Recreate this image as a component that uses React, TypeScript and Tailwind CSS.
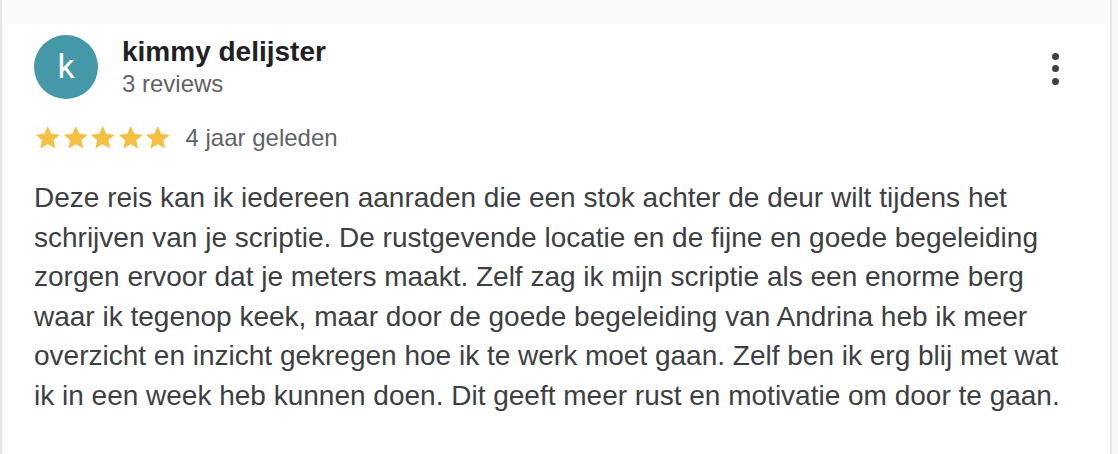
import React from "react";

const Star = () => (
  <svg width="27.5" height="27.5" viewBox="0 0 24 24" className="shrink-0">
    <path
      d="M12 1.8l3.05 6.75 7.35.74-5.5 4.92 1.56 7.23L12 17.7 5.54 21.44l1.56-7.23-5.5-4.92 7.35-.74z"
      fill="#f4bf42"
    />
  </svg>
);

export default function App() {
  const lines = [
    "Deze reis kan ik iedereen aanraden die een stok achter de deur wilt tijdens het",
    "schrijven van je scriptie. De rustgevende locatie en de fijne en goede begeleiding",
    "zorgen ervoor dat je meters maakt. Zelf zag ik mijn scriptie als een enorme berg",
    "waar ik tegenop keek, maar door de goede begeleiding van Andrina heb ik meer",
    "overzicht en inzicht gekregen hoe ik te werk moet gaan. Zelf ben ik erg blij met wat",
    "ik in een week heb kunnen doen. Dit geeft meer rust en motivatie om door te gaan.",
  ];
  return (
    <div
      className="w-[1118px] h-[454px] flex bg-white overflow-hidden"
      style={{ fontFamily: '"Liberation Sans", Arial, sans-serif' }}
    >
      <div className="flex-1 flex flex-col border-l-2 border-[#e6e6e6] bg-white">
        <div className="h-[24px] bg-[#fafafa]" />
        <div className="flex items-start pl-[32px] pt-[11px] pr-[51px]">
          <div
            className="w-[64px] h-[64px] rounded-full bg-[#4598a8] flex items-center justify-center text-white text-[34px] leading-none shrink-0"
            style={{ fontFamily: 'Roboto, "Open Sans", sans-serif' }}
          >
            <span className="-mt-[2px]">k</span>
          </div>
          <div className="ml-[24px] flex flex-col pt-[1px]">
            <div className="text-[28px] leading-[32px] font-bold text-[#202124]">kimmy delijster</div>
            <div className="text-[24px] leading-[28px] text-[#5f6368] mt-[2px]">3 reviews</div>
          </div>
          <div className="ml-auto flex flex-col items-center gap-[5.3px] pt-[18px]">
            <span className="w-[7px] h-[7px] rounded-full bg-[#3c4043]" />
            <span className="w-[7px] h-[7px] rounded-full bg-[#3c4043]" />
            <span className="w-[7px] h-[7px] rounded-full bg-[#3c4043]" />
          </div>
        </div>
        <div className="flex items-center pl-[32px] mt-[25px]">
          <div className="flex">
            <Star />
            <Star />
            <Star />
            <Star />
            <Star />
          </div>
          <span className="ml-[14px] text-[24px] text-[#5f6368] leading-[28px]">4 jaar geleden</span>
        </div>
        <p className="pl-[32px] mt-[26px] text-[28px] leading-[39.5px] text-[#3c4043] whitespace-nowrap">
          {lines.map((l, i) => (
            <React.Fragment key={i}>
              {l}
              {i < lines.length - 1 && <br />}
            </React.Fragment>
          ))}
        </p>
      </div>
      <div className="w-[8px] border-l-2 border-[#e8e8e8] bg-[#f7f7f7]" />
    </div>
  );
}
